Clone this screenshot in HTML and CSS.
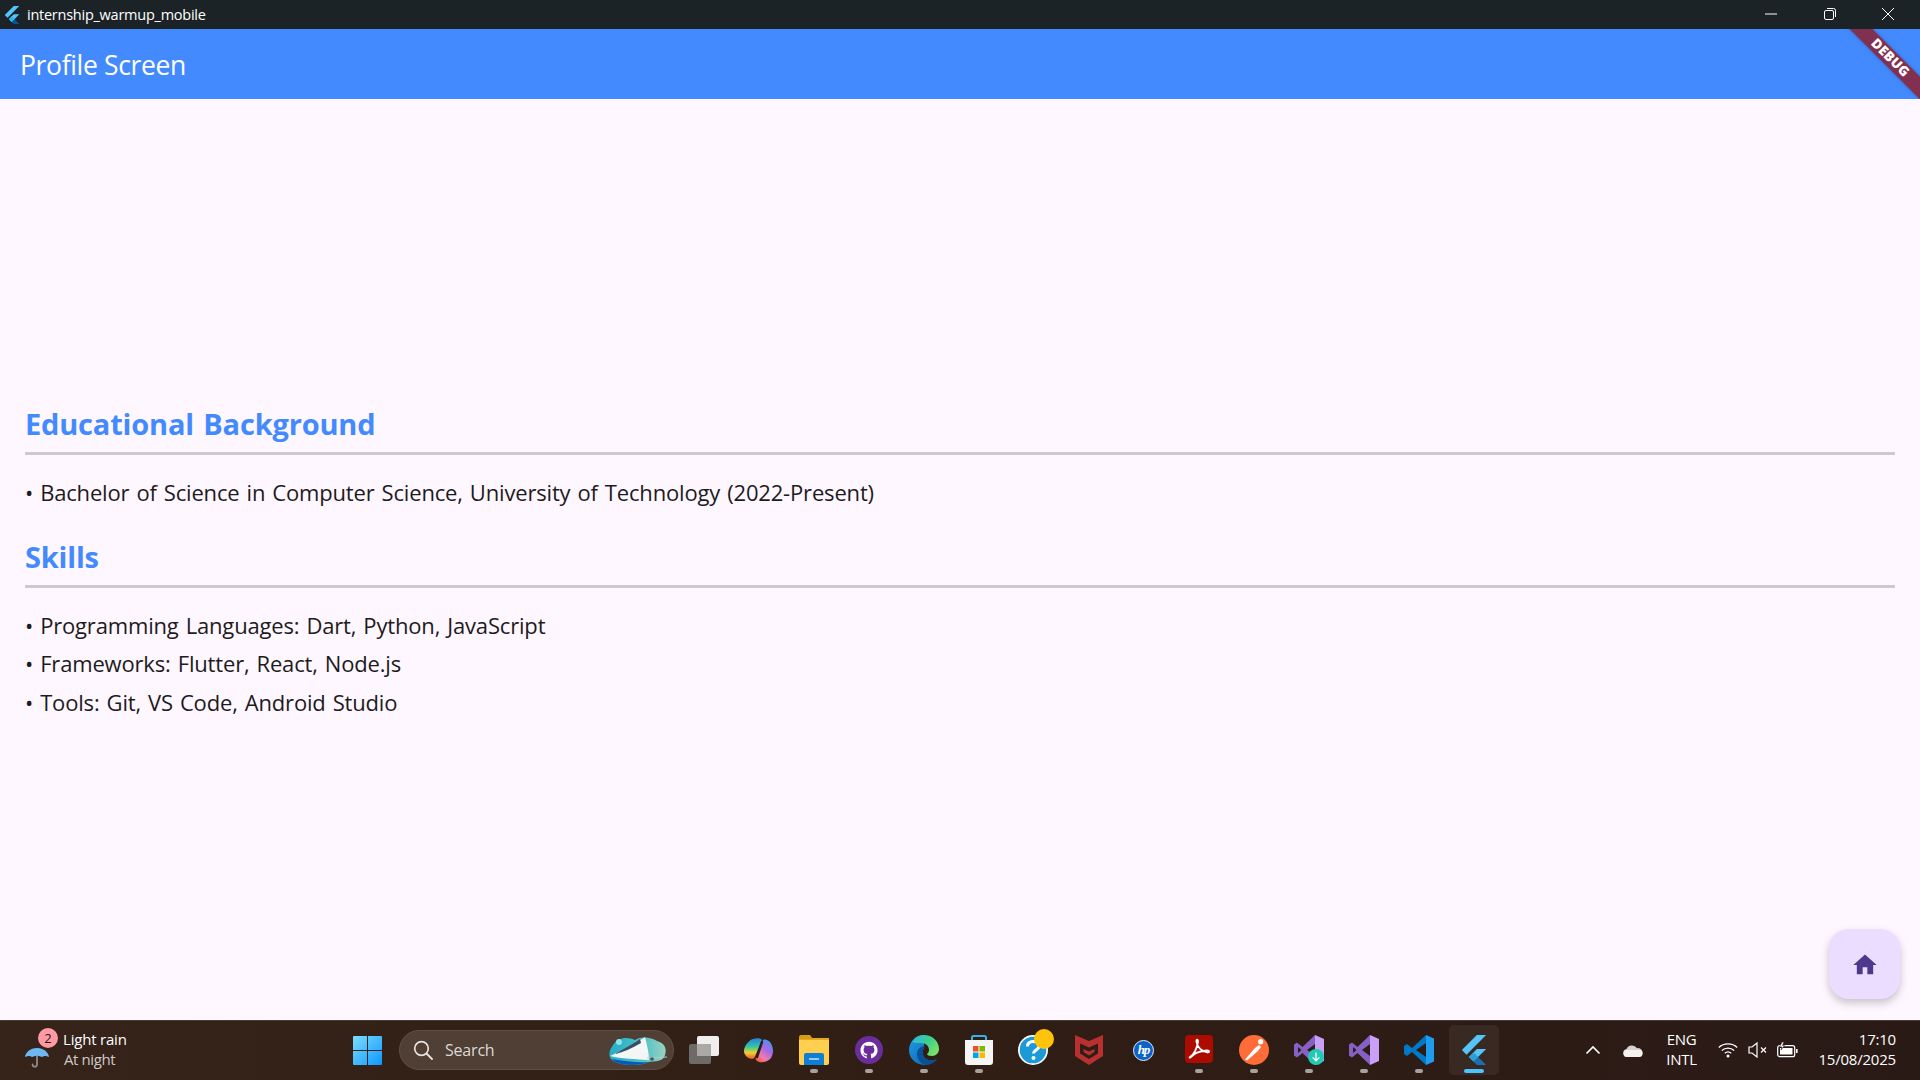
FILE: index.html
```html
<!DOCTYPE html>
<html lang="en">
<head>
<meta charset="utf-8">
<title>internship_warmup_mobile</title>
<link rel="stylesheet" href="styles.css">
</head>
<body>
<div class="window">
  <header class="titlebar">
    <svg class="app-icon" viewBox="0 0 24 24" width="18" height="18"><path fill="#54c5f8" d="M14.3 0 2.3 12 6 15.7 21.7 0z"/><path fill="#54c5f8" d="M14.3 11.1 7.9 17.5l3.7 3.7 10.1-10.1z"/><path fill="#01579b" d="m11.6 21.2 2.7 2.8h7.4l-6.4-6.5z"/><path fill="#29b6f6" d="m7.9 17.5 3.7-3.7 3.7 3.7-3.7 3.7z"/></svg>
    <span class="app-name">internship_warmup_mobile</span>
    <div class="win-controls">
      <svg width="12" height="12" viewBox="0 0 12 12"><path d="M0 6h12" stroke="#fff" fill="none"/></svg>
      <svg width="12" height="12" viewBox="0 0 12 12"><rect x=".5" y="2.5" width="9" height="9" rx="1.5" stroke="#fff" fill="none"/><path d="M3 .5h6.5a2 2 0 0 1 2 2V9" stroke="#fff" fill="none"/></svg>
      <svg width="12" height="12" viewBox="0 0 12 12"><path d="m0 0 12 12M12 0 0 12" stroke="#fff" fill="none"/></svg>
    </div>
  </header>

  <div class="appbar">
    <h1 class="appbar-title">Profile Screen</h1>
    <div class="banner"><span class="banner-text">DEBUG</span></div>
  </div>

  <main class="content">
    <section class="section">
      <h2 class="section-title">Educational Background</h2>
      <hr class="rule">
      <ul class="items">
        <li>• Bachelor of Science in Computer Science, University of Technology (2022-Present)</li>
      </ul>
    </section>
    <section class="section">
      <h2 class="section-title">Skills</h2>
      <hr class="rule">
      <ul class="items">
        <li>• Programming Languages: Dart, Python, JavaScript</li>
        <li>• Frameworks: Flutter, React, Node.js</li>
        <li>• Tools: Git, VS Code, Android Studio</li>
      </ul>
    </section>
    <button class="fab" aria-label="Home">
      <svg class="fab-icon" viewBox="0 0 24 24" width="28" height="28"><path fill="#4f378b" d="M10 20v-6h4v6h5v-8h3L12 3 2 12h3v8z"/></svg>
    </button>
  </main>

  <footer class="taskbar">
    <div class="weather">
      <div class="weather-icon">
        <svg viewBox="0 0 26 26" width="26" height="26"><path d="M13 5C6 5 1.500 9.500 1 14c3-1.500 5-1.500 7 0 2-1.500 8-1.500 10 0 2-1.500 4-1.500 7 0C24.500 9.500 20 5 13 5z" fill="#6db8f2"/><path d="M13 13v8.500a2.200 2.200 0 0 1-4.400 0" stroke="#8f8a88" stroke-width="1.800" fill="none" stroke-linecap="round"/></svg>
        <span class="weather-badge">2</span>
      </div>
      <div class="weather-text">
        <span class="weather-main">Light rain</span>
        <span class="weather-sub">At night</span>
      </div>
    </div>

    <div class="slot">
      <svg viewBox="0 0 29 29" width="29" height="29"><defs><linearGradient id="win" x1="0" y1="0" x2="1" y2="1"><stop offset="0" stop-color="#7ddcff"/><stop offset="1" stop-color="#0c98ff"/></linearGradient></defs><path fill="url(#win)" d="M1 0h13v14H0V1a1 1 0 0 1 1-1zm14 0h13a1 1 0 0 1 1 1v13H15zM0 15h14v14H1a1 1 0 0 1-1-1zm15 0h14v13a1 1 0 0 1-1 1H15z"/></svg>
    </div>

    <div class="searchbox">
      <svg viewBox="0 0 20 20" width="20" height="20"><circle cx="8.500" cy="8.500" r="6.800" stroke="#e8e3df" stroke-width="1.700" fill="none"/><path d="m13.500 13.500 5.500 5.500" stroke="#e8e3df" stroke-width="1.800" stroke-linecap="round"/></svg>
      <span class="search-label">Search</span>
      <svg class="search-art" viewBox="0 0 60 31" width="60" height="31"><defs><linearGradient id="blob" x1="0" y1="0" x2="1" y2="0"><stop offset="0" stop-color="#24aec8"/><stop offset=".6" stop-color="#4fc0c4"/><stop offset="1" stop-color="#9ad2c2"/></linearGradient></defs><path fill="url(#blob)" d="M6 10C10 3 20 1 28 5 34 1 44 2 50 6c8 2 10 8 8 14-2 7-10 6-16 7-8 4-26 4-34 0C2 24 0 18 6 10z"/><path fill="#0a58b8" d="M5 24c12 2 27 4 37 3-8 4-26 4-34 0z"/><path fill="#f2f7f6" d="M38 2c2 8 4 16 4 23-12-1-28-1-39-4C14 16 30 8 38 2z"/><path fill="#3c4d60" d="M33 4C25 10 14 15 8 19c8-2 18-6 26-11z"/><path d="M40 23l20-1" stroke="#b0c8c8" fill="none"/><circle cx="45" cy="24" r="1.800" fill="#3c5a64"/><circle cx="12" cy="7" r="3" fill="#8ce3ee"/></svg>
    </div>

    <div class="slot">
      <svg viewBox="0 0 30 30" width="30" height="30"><rect x="0" y="9" width="22" height="20" rx="2" fill="#6e6a68"/><rect x="8" y="1" width="22" height="20" rx="2" fill="#f0eeec"/><rect x="8" y="9" width="14" height="12" fill="#aba8a6"/></svg>
    </div>
    <div class="slot">
      <svg viewBox="0 0 30 25" width="30" height="25"><defs><linearGradient id="cp1" x1="0" y1="0" x2="0" y2="1"><stop offset="0" stop-color="#2a7fe8"/><stop offset=".4" stop-color="#30c8a0"/><stop offset=".7" stop-color="#f0d030"/><stop offset="1" stop-color="#f05030"/></linearGradient><linearGradient id="cp2" x1=".8" y1="0" x2=".2" y2="1"><stop offset="0" stop-color="#3a9af0"/><stop offset=".4" stop-color="#a868e8"/><stop offset=".75" stop-color="#f07ab0"/><stop offset="1" stop-color="#f0603c"/></linearGradient></defs><path fill="url(#cp1)" d="M9 1c3-1 8-1 9 1l-6 14c-1 3-2 5-4 5-4 0-8-4-8-8C0 8 5 2 9 1z"/><path fill="url(#cp2)" d="M19 2c2-1 5 0 7 2 3 4 4 9 2 14-2 5-8 7-13 6-3-1-4-3-3-5l6-14z"/><path d="M18 4 13 19" stroke="#2f1d15" stroke-width="2.400" stroke-linecap="round"/></svg>
    </div>
    <div class="slot on">
      <svg viewBox="0 0 30 30" width="30" height="30"><path fill="#d89c14" d="M0 2a2 2 0 0 1 2-2h9l3 4h16v6H0z"/><path fill="#ffd04f" d="M0 4h30v24a2 2 0 0 1-2 2H2a2 2 0 0 1-2-2z"/><path fill="#e6a91e" d="M0 4h12l2-1h16v2H0z"/><path fill="#0f7fd6" d="M5 20a2 2 0 0 1 2-2h16a2 2 0 0 1 2 2v10H5z"/><path d="M10 24h10" stroke="#bfe3ff" stroke-width="1.500"/></svg>
    </div>
    <div class="slot on">
      <svg viewBox="0 0 28 28" width="28" height="28"><circle cx="14" cy="14" r="14" fill="#6b2d9b"/><g transform="translate(5.500 5.500) scale(.71)"><path fill="#fff" d="M12 .297c-6.630 0-12 5.373-12 12 0 5.303 3.438 9.800 8.205 11.385.6.113.82-.258.82-.577 0-.285-.01-1.040-.015-2.040-3.338.724-4.042-1.610-4.042-1.610C4.422 18.070 3.633 17.700 3.633 17.700c-1.087-.744.084-.729.084-.729 1.205.084 1.838 1.236 1.838 1.236 1.070 1.835 2.809 1.305 3.495.998.108-.776.417-1.305.76-1.605-2.665-.3-5.466-1.332-5.466-5.930 0-1.310.465-2.380 1.235-3.220-.135-.303-.54-1.523.105-3.176 0 0 1.005-.322 3.300 1.230.96-.267 1.980-.399 3-.405 1.020.006 2.040.138 3 .405 2.280-1.552 3.285-1.230 3.285-1.230.645 1.653.24 2.873.12 3.176.765.84 1.230 1.910 1.230 3.220 0 4.610-2.805 5.625-5.475 5.920.42.36.81 1.096.81 2.220 0 1.606-.015 2.896-.015 3.286 0 .315.21.69.825.57C20.565 22.092 24 17.592 24 12.297c0-6.627-5.373-12-12-12"/></g></svg>
    </div>
    <div class="slot on">
      <svg viewBox="0 0 30 30" width="30" height="30"><defs><linearGradient id="ed1" x1="0" y1="0" x2="1" y2="1"><stop offset="0" stop-color="#1f9ee8"/><stop offset="1" stop-color="#0b5aa8"/></linearGradient><linearGradient id="ed2" x1="0" y1="0" x2="1" y2=".6"><stop offset="0" stop-color="#2bb5ea"/><stop offset=".6" stop-color="#3fd18a"/><stop offset="1" stop-color="#7ae06a"/></linearGradient></defs><path fill="url(#ed1)" d="M15 0a15 15 0 0 0 0 30c5 0 10-2 13-6-4 2-9 2-12-1-3-3-3-7-1-10z"/><path fill="url(#ed2)" d="M3 7c3-5 7-7 12-7 8 0 15 6 15 14 0 4-3 7-7 7-3 0-5-1-5-2 1-1 2-2 2-4 0-4-3-7-8-7-4 0-7 0-9-1z"/><path fill="#0b4f96" d="M16 11c-4 0-8 3-8 8 0 5 4 10 9 11 4 0 8-2 11-6-4 2-9 2-12-1-3-3-3-8 0-12z"/></svg>
    </div>
    <div class="slot on">
      <svg viewBox="0 0 30 30" width="30" height="30"><path d="M8 6V2.500A1.500 1.500 0 0 1 9.500 1h11A1.500 1.500 0 0 1 22 2.500V6" stroke="#31b3f0" stroke-width="2" fill="none"/><path fill="#f5f5f5" d="M1 5h28v22a3 3 0 0 1-3 3H4a3 3 0 0 1-3-3z"/><rect x="9" y="11" width="5.500" height="5.500" fill="#f25022"/><rect x="15.500" y="11" width="5.500" height="5.500" fill="#7fba00"/><rect x="9" y="17.500" width="5.500" height="5.500" fill="#00a4ef"/><rect x="15.500" y="17.500" width="5.500" height="5.500" fill="#ffb900"/></svg>
    </div>
    <div class="slot">
      <svg class="help-icon" viewBox="0 0 36 36" width="36" height="36"><circle cx="15" cy="21" r="15" fill="#fff"/><circle cx="15" cy="21" r="13.300" fill="#1b9ad6"/><path d="M9.500 17.500c0-3.500 2.500-5 5.700-5 3.300 0 5.800 1.700 5.800 4.500 0 4-5.500 4-5.500 7.500" stroke="#fff" stroke-width="3" fill="none"/><circle cx="15.500" cy="29" r="2" fill="#fff"/><circle cx="26" cy="10" r="10" fill="#ffc30b"/></svg>
    </div>
    <div class="slot">
      <svg viewBox="0 0 28 30" width="28" height="30"><path fill="#b83030" d="M0 0l14 6 14-6v21l-14 9-14-9z"/><path fill="#2f1d16" d="M5 8.500l9 4 9-4v10l-9 5.500-9-5.500z"/><path fill="#b83030" d="M8.500 14l5.500 2.500 5.500-2.500v3l-5.500 3.500L8.500 17z"/></svg>
    </div>
    <div class="slot">
      <div class="hp-logo"><span class="hp-text">hp</span></div>
    </div>
    <div class="slot on">
      <svg class="acrobat" viewBox="0 0 28 28" width="28" height="28"><rect width="28" height="28" rx="4" fill="#ad0b00"/><path d="M5 22c4-2 7-9 8-15 0-3-2-3-1.500 0 .5 5 5.500 10 11.500 10.500 2-.5 1-2.500-2-2-5 .5-11 2.500-14 5.500-2 2-3 2-2 1z" stroke="#fff" stroke-width="1.800" fill="none"/></svg>
    </div>
    <div class="slot on">
      <svg viewBox="0 0 30 30" width="30" height="30"><circle cx="15" cy="15" r="15" fill="#ff6c37"/><path d="M6 24.500 16 13l4-3 2 2-3 4L8 25.500z" fill="#fff"/><circle cx="21.700" cy="6.700" r="2.600" fill="#fff"/></svg>
    </div>
    <div class="slot on">
      <svg viewBox="0 0 30 30" width="30" height="30"><path fill="#c9a0f5" d="M21 0l9 4v22l-9 4z"/><path fill="#8661c5" fill-rule="evenodd" d="M21 0v9l-8 6 8 6v9L8.500 18 3 22.500 0 20.500v-11L3 7.500 8.500 12zM4 12v6l3.500-3z"/></svg>
      <span class="dl-badge"><svg viewBox="0 0 16 16" width="12" height="12"><path d="M8 2v11M3.500 8.500 8 13l4.500-4.500" stroke="#fff" stroke-width="1.700" fill="none"/></svg></span>
    </div>
    <div class="slot on">
      <svg viewBox="0 0 30 30" width="30" height="30"><path fill="#c9a0f5" d="M21 0l9 4v22l-9 4z"/><path fill="#8661c5" fill-rule="evenodd" d="M21 0v9l-8 6 8 6v9L8.500 18 3 22.500 0 20.500v-11L3 7.500 8.500 12zM4 12v6l3.500-3z"/></svg>
    </div>
    <div class="slot on">
      <svg viewBox="0 0 30 30" width="30" height="30"><path fill="#0078c8" d="M22 0 8 13 3 9 0 11v8l3 2 5-4 14 13v-8L12 15 22 8z"/><path fill="#1f9cf0" d="m22 0 8 3.500v23L22 30z"/></svg>
    </div>
    <div class="slot active">
      <svg viewBox="0 0 24 24" width="30" height="30"><path fill="#54c5f8" d="M14.300 0 2.300 12 6 15.700 21.700 0z"/><path fill="#54c5f8" d="M14.300 11.100 7.900 17.500l3.700 3.700 10.100-10.100z"/><path fill="#1c6fb0" d="m11.600 21.200 2.700 2.800h7.400l-6.400-6.500z"/><path fill="#2a9fdc" d="m7.900 17.500 3.700-3.700 3.700 3.700-3.700 3.700z"/></svg>
    </div>

    <div class="tray">
      <svg class="tray-chevron" viewBox="0 0 16 10" width="16" height="10"><path d="m1.500 8.500 6.500-6.500 6.500 6.500" stroke="#fff" stroke-width="1.600" fill="none"/></svg>
      <svg class="tray-cloud" viewBox="0 0 20 13" width="20" height="13"><path fill="#d5d2d0" d="M4 13a4 4 0 0 1-.500-7.900A6 6 0 0 1 14 4.200 4.500 4.500 0 0 1 16 13z"/><path fill="#f4f3f2" d="M4 13a3.500 3.500 0 0 1 0-7h12a3.500 3.500 0 0 1 0 7z"/></svg>
      <div class="lang"><span>ENG</span><span>INTL</span></div>
      <svg class="tray-wifi" viewBox="0 0 20 16" width="20" height="16"><g stroke="#fff" fill="none" stroke-width="1.200"><path d="M.8 5.500c5-4.800 13.400-4.800 18.400 0"/><path d="M3.800 8.500c3.400-3.200 9-3.200 12.400 0"/><path d="M6.800 11.300c1.800-1.600 4.600-1.600 6.400 0"/></g><circle cx="10" cy="14" r="1.500" fill="#fff"/></svg>
      <svg class="tray-mute" viewBox="0 0 20 16" width="20" height="16"><path d="M1 5h3l5-4v14l-5-4H1z" stroke="#fff" stroke-width="1.200" fill="none"/><path d="m13 5.500 5 5m0-5-5 5" stroke="#fff" stroke-width="1.200"/></svg>
      <svg class="tray-batt" viewBox="0 0 21 16" width="21" height="16"><rect x=".7" y="3.700" width="17" height="11" rx="2" stroke="#fff" stroke-width="1.200" fill="none"/><rect x="3" y="6" width="12.500" height="6.500" fill="#fff"/><rect x="19" y="7" width="1.600" height="4" fill="#fff"/><path d="M5 0 2.500 5h2.500l-1 3 3.500-4.500H5.500L7 0z" fill="#fff" stroke="#2b1a15" stroke-width=".6"/></svg>
      <div class="clock"><span>17:10</span><span>15/08/2025</span></div>
    </div>
  </footer>
</div>
</body>
</html>
```

FILE: styles.css
```css
* { box-sizing: border-box; }
html, body { margin: 0; height: 100%; }
body { font-family: "Open Sans", "Noto Sans", sans-serif; overflow: hidden; }

.window { display: flex; flex-direction: column; width: 1920px; height: 1080px; }

.titlebar { flex: 0 0 29px; display: flex; align-items: center; background: #1c2327; color: #fff; padding-left: 3px; }
.app-icon { flex: none; }
.app-name { margin-left: 6px; font-size: 14.5px; letter-spacing: -.25px; }
.win-controls { margin-left: auto; display: flex; align-items: center; gap: 46.5px; padding: 0 26px 2px 0; }

.appbar { flex: 0 0 70px; position: relative; overflow: hidden; display: flex; align-items: center; background: #448aff; padding: 2px 0 0 20px; }
.appbar-title { margin: 0; font-size: 26.5px; font-weight: 400; color: #fff; letter-spacing: -.35px; }
.banner { position: absolute; left: 1830px; top: 21px; width: 120px; height: 16px; display: flex; align-items: center; justify-content: center; background: #82304f; box-shadow: 0 0 4px rgba(0,0,0,.3); transform: rotate(45deg); }
.banner-text { color: #fff; font-size: 13.5px; font-weight: 800; letter-spacing: .2px; line-height: 1; }

.content { flex: 1; position: relative; background: #fef7ff; padding: 301px 25px 0; }
.section-title { margin: 0; color: #448aff; font-size: 29px; font-weight: 700; line-height: 48px; letter-spacing: -.18px; word-spacing: 2px; }
.rule { margin: 4px 0 0; border: 0; height: 3px; background: #cdc8d0; }
.items { list-style: none; margin: 0; padding: 18px 0 0; color: #1d1b20; font-size: 22px; line-height: 38.5px; letter-spacing: -.17px; word-spacing: 1.5px; }
.section + .section { margin-top: 21px; }
.fab { position: absolute; left: 1829px; top: 830px; width: 71px; height: 70px; display: flex; align-items: center; justify-content: center; border: 0; border-radius: 20px; background: #eaddff; box-shadow: 0 4px 8px rgba(0,0,0,.22); padding: 0; }
.fab-icon { margin-top: 2px; }

.taskbar { flex: 0 0 60px; display: flex; align-items: center; padding-bottom: 1px; background: linear-gradient(90deg, #36231a, #301e15 50%, #2a1a16); border-top: 1px solid #4a3b35; color: #fff; }
.weather { flex: 0 0 340px; display: flex; align-items: center; padding-left: 24px; }
.weather-icon { position: relative; width: 26px; height: 26px; margin-top: 12px; }
.weather-badge { position: absolute; left: 14px; top: -15px; width: 20px; height: 20px; border-radius: 50%; background: #ff99a4; color: #1a1a1a; font-size: 13px; line-height: 20px; text-align: center; }
.weather-text { display: flex; flex-direction: column; margin: -2px 0 0 13px; }
.weather-main { font-size: 15px; line-height: 20px; letter-spacing: -.2px; }
.weather-sub { margin-left: 1px; font-size: 15px; line-height: 20px; color: #cfc9c6; letter-spacing: -.4px; }

.slot { position: relative; flex: 0 0 55px; height: 50px; display: flex; align-items: center; justify-content: center; }
.slot.on::after, .slot.active::after { content: ""; position: absolute; left: 23.500px; bottom: 2px; width: 8px; height: 4px; border-radius: 2px; background: #a8a29e; }
.slot.active { border-radius: 5px; background: rgba(255,255,255,.06); flex-basis: 50px; margin-left: 2.500px; }
.slot.active::after { left: 15px; width: 20px; background: #4cc2ff; }

.searchbox { flex: 0 0 275px; height: 40px; margin: 0 2px 0 4px; position: relative; display: flex; align-items: center; padding-left: 13px; border-radius: 20px; background: #4f3f35; border: 1px solid #5e4f45; }
.search-label { margin-left: 12px; font-size: 16px; color: #ddd8d4; letter-spacing: -.2px; }
.search-art { position: absolute; right: 6px; top: 4px; }

.help-icon { margin: -6px 0 0 5px; }
.acrobat { margin-top: -3px; }
.hp-logo { width: 21px; height: 21px; border-radius: 50%; background: #0a63c9; border: 1px solid #e8eef5; display: flex; align-items: center; justify-content: center; }
.hp-text { color: #fff; font: italic 700 13px "Liberation Serif", serif; letter-spacing: -1px; }
.dl-badge { position: absolute; left: 27px; top: 24px; width: 16px; height: 16px; border-radius: 50%; background: #22c9b4; display: flex; align-items: center; justify-content: center; }

.tray { flex: 1; display: flex; align-items: center; padding: 0 24px 0 86px; }
.tray-cloud { margin-left: 22px; }
.lang { margin: -2px 0 0 14px; width: 50px; display: flex; flex-direction: column; align-items: center; font-size: 15px; line-height: 20px; letter-spacing: -.3px; }
.tray-wifi { margin-left: 11px; }
.tray-mute { margin-left: 10px; }
.tray-batt { margin-left: 9px; }
.clock { margin: -2px 0 0 auto; display: flex; flex-direction: column; align-items: flex-end; font-size: 15px; line-height: 20px; letter-spacing: -.2px; }
```
